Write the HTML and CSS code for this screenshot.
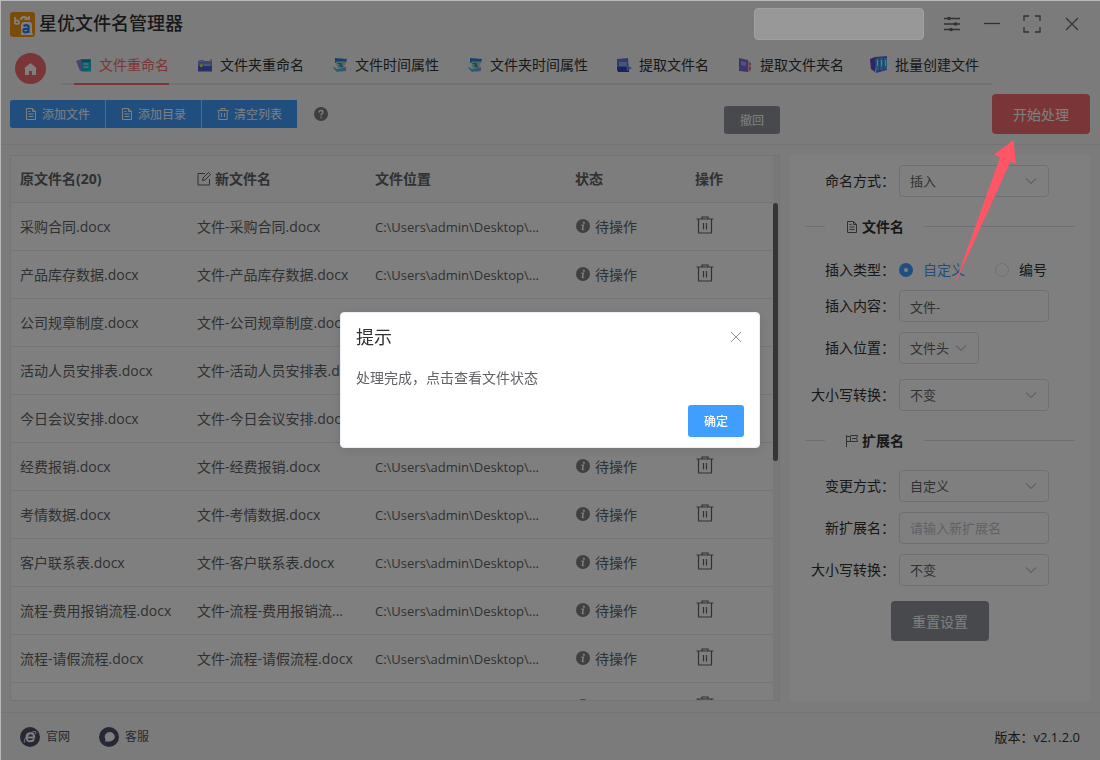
FILE: index.html
```html
<!DOCTYPE html>
<html lang="zh-CN">
<head>
  <meta charset="UTF-8">
  <meta name="viewport" content="width=device-width, initial-scale=1.0">
  <title>星优文件名管理器</title>
  <link rel="stylesheet" href="styles.css">
</head>
<body>
  <!-- Shared icons -->
  <svg class="icon-defs" aria-hidden="true">
    <symbol id="i-doc" viewBox="0 0 12 12"><path d="M1.5.5h6l3 3v8h-9zM7.5.5v3h3M3.5 6h5M3.5 8.5h5M3.5 3.5h2" fill="none" stroke="currentColor"/></symbol>
    <symbol id="i-bin" viewBox="0 0 12 12"><path d="M.5 2.5h11M4 2.5v-2h4v2M1.8 2.5v9h8.4v-9M4.5 5v4M7.5 5v4" fill="none" stroke="currentColor"/></symbol>
    <symbol id="i-trash" viewBox="0 0 18 18"><path d="M.5 3h17M6 2.5V1h6v1.5M2.500 3v14h13V3M7.500 7v6.500M10.500 7v6.500" fill="none" stroke="currentColor" stroke-width="1.200"/></symbol>
    <symbol id="i-info" viewBox="0 0 14 14"><circle cx="7" cy="7" r="7" fill="currentColor"/><circle cx="7.900" cy="3.700" r="1.100" fill="#fff"/><path d="M5.400 6.200H7.400L6.400 10.200Q6.400 10.900 8 10.200" fill="none" stroke="#fff" stroke-width="1.400"/></symbol>
    <symbol id="i-down" viewBox="0 0 12 12"><path d="M1 3.500l5 5 5-5" fill="none" stroke="currentColor" stroke-width="1.100"/></symbol>
    <symbol id="i-calendar" viewBox="0 0 16 16"><path d="M3 1l12 1-1 4H3z" fill="#2787d8"/><path d="M4 4.500h10L12 11H5z" fill="#a9d6c8"/><path d="M5.500 6.500h3l-1 3M10 6.500l-1 3h2" fill="none" stroke="#2f8fc0" stroke-width="1.200"/><path d="M11.500 7l1.500-.5-1 3z" fill="#e8d75a"/><path d="M1 9.500l4 2.500 9-2v3.500L5 15 2 12z" fill="#3ecbd2"/><path d="M9 12l5-1.500V14l-5 .5z" fill="#8d9be8"/></symbol>
  </svg>

  <!-- Title Bar -->
  <header class="titlebar">
    <svg class="logo" viewBox="0 0 25 25" aria-hidden="true">
      <rect width="25" height="25" rx="3" fill="#f29a12"/>
      <path d="M5 5v7M5 8.500h2.300a1.700 1.700 0 010 3.400H5" fill="none" stroke="#fff" stroke-width="1.800"/>
      <path d="M10.500 7.500Q14 2.500 17 7" fill="none" stroke="#fff" stroke-width="2.400"/>
      <path d="M13.500 8h6.500V3.500z" fill="#fff"/>
      <path d="M14 10h5.500q2.500 0 2.500 3v7l1 3H11v-9q0-4 3-4z" fill="#fff"/>
      <path d="M13.500 14q3-1.800 5 0v7M18.500 16.800h-3q-2.500.3-2 2.300.5 1.600 2.500 1.200 2.500-.5 2.500-2" fill="none" stroke="#2f80f0" stroke-width="2.200"/>
    </svg>
    <h1>星优文件名管理器</h1>
    <input class="search" type="text" aria-label="搜索">
    <div class="window-actions">
      <button type="button" aria-label="设置"><svg viewBox="0 0 18 18"><path d="M1 3.500h16M1 9h16M1 14.500h16" stroke="currentColor" stroke-width="1.300"/><circle cx="6" cy="3.500" r="1.800"/><circle cx="12.500" cy="9" r="1.800"/><circle cx="8" cy="14.500" r="1.800"/></svg></button>
      <button type="button" aria-label="最小化"><svg viewBox="0 0 18 18"><path d="M1 8.500h16" stroke="currentColor" stroke-width="1.300"/></svg></button>
      <button type="button" aria-label="最大化"><svg viewBox="0 0 18 18"><path d="M1 6V1h5M12 1h5v5M17 12v5h-5M6 17H1v-5" fill="none" stroke="currentColor" stroke-width="1.300"/></svg></button>
      <button type="button" aria-label="关闭"><svg viewBox="0 0 18 18"><path d="M3 3l12 12M15 3L3 15" stroke="currentColor" stroke-width="1.200"/></svg></button>
    </div>
  </header>

  <!-- Navigation -->
  <nav class="navbar">
    <a href="#" class="home" aria-label="首页"><svg viewBox="0 0 13 12"><path d="M6.500 0L0 5.500h1V12h4V8h3v4h4V5.500h1z" fill="currentColor"/></svg></a>
    <div class="tabs">
      <a href="#" class="tab active"><svg viewBox="0 0 16 16"><path d="M0 4l6-2 2 11-4 1z" fill="#8f8bdc"/><path d="M5 2h10v12.500H5.500z" fill="#18bcd0"/><path d="M6 3h8v2H6z" fill="#128fbd"/><path d="M7.500 7h5M7.500 10h5" stroke="#9deef2" stroke-width="1.400"/></svg>文件重命名</a>
      <a href="#" class="tab"><svg viewBox="0 0 16 16"><path d="M1 4h14v10H1z" fill="#7d8fe8"/><path d="M2 3h5v2H2z" fill="#8fa0ee"/><path d="M1 9h14v5.500H1z" fill="#4a60d0"/><path d="M3 7.500l2.500-1V10H3z" fill="#dfe05c"/><path d="M7 8h6" stroke="#a9d9e8"/><circle cx="14" cy="3" r="1" fill="#eb8c8c"/></svg>文件夹重命名</a>
      <a href="#" class="tab"><svg><use href="#i-calendar"/></svg>文件时间属性</a>
      <a href="#" class="tab"><svg><use href="#i-calendar"/></svg>文件夹时间属性</a>
      <a href="#" class="tab"><svg viewBox="0 0 16 16"><path d="M1 2l11-1 1 13H1z" fill="#5f78e4"/><path d="M3 5h8v4H3z" fill="#93a9f0"/><path d="M1 10h12v5H2z" fill="#2f46bc"/><path d="M10 8l6 3-5 3z" fill="#6c8de6"/></svg>提取文件名</a>
      <a href="#" class="tab"><svg viewBox="0 0 16 16"><path d="M2 1l9 2v12l-9-1z" fill="#7a6ddc"/><path d="M4 4l5 1v4l-5-1z" fill="#aba4f0"/><path d="M11 4l3 1v9l-3 1z" fill="#e6b2c3"/><path d="M13 6v2M13 10v3" stroke="#d85c77" stroke-width="1.500"/></svg>提取文件夹名</a>
      <a href="#" class="tab"><svg class="wide" viewBox="0 0 18 17"><path d="M0 3l5-2v15l-4-3z" fill="#5a4acb"/><path d="M4 1l13-1v14L6 17z" fill="#7564dc"/><path d="M6 3l3-1v12l-3 1zM10 2h3v12h-3zM14 2h3v11h-3z" fill="#46afe6"/><path d="M7.500 4v6M11.500 4v6M15.500 4v6" stroke="#cef2f3"/></svg>批量创建文件</a>
    </div>
  </nav>

  <!-- Toolbar -->
  <section class="toolbar">
    <div class="btn-group">
      <button type="button"><svg><use href="#i-doc"/></svg>添加文件</button>
      <button type="button"><svg><use href="#i-doc"/></svg>添加目录</button>
      <button type="button"><svg><use href="#i-bin"/></svg>清空列表</button>
    </div>
    <svg class="help" viewBox="0 0 14 14" role="img" aria-label="帮助"><circle cx="7" cy="7" r="7" fill="#7c7c7c"/><path d="M5 5.500Q5 3.500 7 3.500t2 1.800q0 1-1.200 1.600Q7 7.400 7 8.500M7 9.800v1.400" fill="none" stroke="#fff" stroke-width="1.300"/></svg>
    <button type="button" class="btn btn-info undo">撤回</button>
    <div class="start">
      <button type="button" class="btn btn-danger btn-large">开始处理</button>
      <svg class="pointer" viewBox="0 0 62 146" aria-hidden="true"><path d="M59.500 0L40 14.500l6 3L0 146 56.500 21.500l5.500 2z" fill="#ff5565"/></svg>
    </div>
  </section>

  <!-- File list and settings -->
  <main class="main">
    <div class="list">
      <table class="files">
        <colgroup><col class="col-old"><col class="col-new"><col class="col-path"><col class="col-state"><col></colgroup>
        <thead>
          <tr>
            <th>原文件名(20)</th>
            <th><svg class="edit" viewBox="0 0 14 14"><path d="M8 1.500H1v11.500h11.500V7M5.500 8.500L6 6l5.500-5.500 2 2L8 8z" fill="none" stroke="currentColor"/></svg>新文件名</th>
            <th>文件位置</th>
            <th>状态</th>
            <th>操作</th>
          </tr>
        </thead>
        <tbody>
          <tr><td>采购合同.docx</td><td>文件-采购合同.docx</td><td class="path">C:\Users\admin\Desktop\...</td><td><svg class="info"><use href="#i-info"/></svg>待操作</td><td><button type="button" aria-label="删除"><svg><use href="#i-trash"/></svg></button></td></tr>
          <tr><td>产品库存数据.docx</td><td>文件-产品库存数据.docx</td><td class="path">C:\Users\admin\Desktop\...</td><td><svg class="info"><use href="#i-info"/></svg>待操作</td><td><button type="button" aria-label="删除"><svg><use href="#i-trash"/></svg></button></td></tr>
          <tr><td>公司规章制度.docx</td><td>文件-公司规章制度.docx</td><td class="path">C:\Users\admin\Desktop\...</td><td><svg class="info"><use href="#i-info"/></svg>待操作</td><td><button type="button" aria-label="删除"><svg><use href="#i-trash"/></svg></button></td></tr>
          <tr><td>活动人员安排表.docx</td><td>文件-活动人员安排表.docx</td><td class="path">C:\Users\admin\Desktop\...</td><td><svg class="info"><use href="#i-info"/></svg>待操作</td><td><button type="button" aria-label="删除"><svg><use href="#i-trash"/></svg></button></td></tr>
          <tr><td>今日会议安排.docx</td><td>文件-今日会议安排.docx</td><td class="path">C:\Users\admin\Desktop\...</td><td><svg class="info"><use href="#i-info"/></svg>待操作</td><td><button type="button" aria-label="删除"><svg><use href="#i-trash"/></svg></button></td></tr>
          <tr><td>经费报销.docx</td><td>文件-经费报销.docx</td><td class="path">C:\Users\admin\Desktop\...</td><td><svg class="info"><use href="#i-info"/></svg>待操作</td><td><button type="button" aria-label="删除"><svg><use href="#i-trash"/></svg></button></td></tr>
          <tr><td>考情数据.docx</td><td>文件-考情数据.docx</td><td class="path">C:\Users\admin\Desktop\...</td><td><svg class="info"><use href="#i-info"/></svg>待操作</td><td><button type="button" aria-label="删除"><svg><use href="#i-trash"/></svg></button></td></tr>
          <tr><td>客户联系表.docx</td><td>文件-客户联系表.docx</td><td class="path">C:\Users\admin\Desktop\...</td><td><svg class="info"><use href="#i-info"/></svg>待操作</td><td><button type="button" aria-label="删除"><svg><use href="#i-trash"/></svg></button></td></tr>
          <tr><td>流程-费用报销流程.docx</td><td>文件-流程-费用报销流...</td><td class="path">C:\Users\admin\Desktop\...</td><td><svg class="info"><use href="#i-info"/></svg>待操作</td><td><button type="button" aria-label="删除"><svg><use href="#i-trash"/></svg></button></td></tr>
          <tr><td>流程-请假流程.docx</td><td>文件-流程-请假流程.docx</td><td class="path">C:\Users\admin\Desktop\...</td><td><svg class="info"><use href="#i-info"/></svg>待操作</td><td><button type="button" aria-label="删除"><svg><use href="#i-trash"/></svg></button></td></tr>
          <tr><td></td><td></td><td></td><td><svg class="info"><use href="#i-info"/></svg></td><td><button type="button" aria-label="删除"><svg><use href="#i-trash"/></svg></button></td></tr>
        </tbody>
      </table>
      <div class="scrollbar"><div class="thumb"></div></div>
    </div>

    <form class="settings">
      <div class="row">
        <label for="mode">命名方式：</label>
        <div class="select"><select id="mode"><option>插入</option></select><svg><use href="#i-down"/></svg></div>
      </div>
      <h2 class="divider"><svg><use href="#i-doc"/></svg>文件名</h2>
      <div class="row row-radio">
        <span class="label">插入类型：</span>
        <label class="radio"><input type="radio" name="type" checked><span>自定义</span></label>
        <label class="radio"><input type="radio" name="type"><span>编号</span></label>
      </div>
      <div class="row">
        <label for="content">插入内容：</label>
        <input class="text" id="content" type="text" value="文件-">
      </div>
      <div class="row row-last">
        <label for="position">插入位置：</label>
        <div class="select small"><select id="position"><option>文件头</option></select><svg><use href="#i-down"/></svg></div>
      </div>
      <div class="row">
        <label for="name-case">大小写转换：</label>
        <div class="select"><select id="name-case"><option>不变</option></select><svg><use href="#i-down"/></svg></div>
      </div>
      <h2 class="divider"><svg viewBox="0 0 12 12"><path d="M.5 0v12M.5 1.500h4v5h-4M4.500.5h7l-1 3 1 3h-7M6 3.500h4" fill="none" stroke="currentColor"/></svg>扩展名</h2>
      <div class="row">
        <label for="change">变更方式：</label>
        <div class="select"><select id="change"><option>自定义</option></select><svg><use href="#i-down"/></svg></div>
      </div>
      <div class="row">
        <label for="ext">新扩展名：</label>
        <input class="text" id="ext" type="text" placeholder="请输入新扩展名">
      </div>
      <div class="row row-last">
        <label for="ext-case">大小写转换：</label>
        <div class="select"><select id="ext-case"><option>不变</option></select><svg><use href="#i-down"/></svg></div>
      </div>
      <button type="button" class="btn btn-info btn-large reset">重置设置</button>
    </form>
  </main>

  <!-- Footer -->
  <footer class="footer">
    <a href="#"><svg viewBox="0 0 20 20"><circle cx="10" cy="10" r="10" fill="#4d5369"/><path d="M6.800 10.500h7.400q0-4.300-3.800-4.300T6.500 10.300t4 4q2.500 0 3.500-2" fill="none" stroke="#fff" stroke-width="2"/><path d="M4.500 15.500Q3 13 8 8.500T15.500 4.500q1 .5 0 2.500" fill="none" stroke="#fff"/></svg>官网</a>
    <a href="#"><svg viewBox="0 0 20 20"><circle cx="10" cy="10" r="10" fill="#4d5369"/><path d="M10.500 5a5 4.500 0 110 9.500H6l.5-2A4.800 4.800 0 0110.500 5z" fill="#fff"/></svg>客服</a>
    <span class="version">版本：v2.1.2.0</span>
  </footer>

  <!-- Message Box -->
  <div class="mask">
    <div class="dialog" role="dialog" aria-labelledby="dialog-title">
      <div class="dialog-header">
        <h2 id="dialog-title">提示</h2>
        <button type="button" aria-label="关闭"><svg viewBox="0 0 12 12"><path d="M1 1l10 10M11 1L1 11" stroke="currentColor"/></svg></button>
      </div>
      <p>处理完成，点击查看文件状态</p>
      <div class="dialog-footer">
        <button type="button" class="btn btn-primary">确定</button>
      </div>
    </div>
  </div>
</body>
</html>
```
FILE: styles.css
```css
/* Global Styles */
:root {
  --primary: #409eff;
  --danger: #f56c6c;
  --info: #909399;
  --text: #606266;
  --text-dark: #303133;
  --border: #dcdfe6;
  --line: #e6e8eb;
  --page: #f7f7f7;
}

* {
  margin: 0;
  padding: 0;
  box-sizing: border-box;
}

body {
  display: flex;
  flex-direction: column;
  height: 100vh;
  overflow: hidden;
  font-family: "Open Sans", "Noto Sans CJK SC", sans-serif;
  font-size: 14px;
  line-height: 20px;
  color: var(--text-dark);
  background-color: var(--page);
}

button,
input,
select {
  font-family: inherit;
  border: none;
  background: none;
  color: inherit;
}

a {
  color: inherit;
  text-decoration: none;
}

svg {
  flex: none;
}

.icon-defs {
  display: none;
}

/* Title Bar */
.titlebar {
  display: flex;
  align-items: center;
  height: 48px;
  padding: 0 8px 0 10px;
}

.logo {
  width: 25px;
  height: 25px;
  margin-right: 4px;
}

.titlebar h1 {
  padding-bottom: 2px;
  font-size: 18px;
  font-weight: 500;
}

.search {
  position: relative;
  z-index: 20;
  width: 170px;
  height: 32px;
  margin-left: auto;
  margin-right: 8px;
  border: 1px solid #a0a0a0;
  border-radius: 4px;
  background-color: #989898;
}

.window-actions {
  display: flex;
  color: var(--text);
  fill: currentColor;
}

.window-actions button {
  display: flex;
  align-items: center;
  justify-content: center;
  width: 40px;
  height: 32px;
}

.window-actions svg {
  width: 18px;
  height: 18px;
}

/* Navigation */
.navbar {
  display: flex;
  align-items: flex-start;
  padding: 0 15px;
}

.home {
  display: flex;
  align-items: center;
  justify-content: center;
  width: 31px;
  height: 31px;
  margin-top: 5px;
  margin-right: 15px;
  border-radius: 50%;
  background-color: var(--danger);
  color: #fff;
}

.home svg {
  width: 13px;
  height: 12px;
}

.tabs {
  display: flex;
  gap: 26px;
  height: 37px;
  padding: 0 13px;
  border-bottom: 2px solid #e4e7ed;
}

.tab {
  display: flex;
  align-items: center;
  height: 37px;
  padding-left: 2px;
  padding-bottom: 2px;
  white-space: nowrap;
  border-bottom: 2px solid transparent;
}

.tab svg {
  width: 16px;
  height: 16px;
  margin-right: 7px;
}

.tab .wide {
  width: 18px;
  height: 17px;
  margin-left: -2px;
}

.tab.active {
  color: var(--danger);
  border-bottom-color: var(--danger);
}

/* Toolbar */
.toolbar {
  display: flex;
  align-items: center;
  padding: 9px 10px 10px;
  border-bottom: 1px solid var(--line);
}

.btn-group {
  display: flex;
  gap: 1px;
  border-radius: 3px 0 0 3px;
  overflow: hidden;
  background-color: #b3d8ff;
}

.btn-group button {
  display: flex;
  align-items: center;
  justify-content: center;
  gap: 5px;
  width: 95px;
  height: 28px;
  font-size: 12px;
  color: #fff;
  background-color: var(--primary);
}

.btn-group svg {
  width: 12px;
  height: 12px;
}

.help {
  width: 14px;
  height: 14px;
  margin-left: 17px;
}

.btn {
  height: 28px;
  padding: 0 16px;
  border-radius: 3px;
  font-size: 12px;
  color: #fff;
}

.btn-large {
  display: block;
  height: 40px;
  padding: 0 21px;
  border-radius: 4px;
  font-size: 14px;
}

.btn-primary {
  height: 32px;
  font-weight: 500;
  background-color: var(--primary);
}

.btn-info {
  background-color: var(--info);
}

.btn-danger {
  background-color: var(--danger);
}

.undo {
  margin-top: 12px;
  margin-left: auto;
}

.start {
  position: relative;
  margin-left: 212px;
}

.pointer {
  position: absolute;
  z-index: 20;
  top: 46px;
  left: -38px;
  width: 62px;
  height: 146px;
}

/* File list */
.main {
  display: flex;
  flex: 1;
  gap: 10px;
  min-height: 0;
  padding: 10px 10px 11px;
}

.list {
  display: flex;
  flex: 1;
  overflow: hidden;
  border: 1px solid var(--line);
  background-color: #fff;
}

.files {
  flex: 1;
  align-self: flex-start;
  table-layout: fixed;
  border-collapse: separate;
  border-spacing: 0;
}

.col-old {
  width: 177px;
}

.col-new {
  width: 178px;
}

.col-path {
  width: 200px;
}

.col-state {
  width: 120px;
}

.files th,
.files td {
  height: 48px;
  padding-left: 9px;
  text-align: left;
  white-space: nowrap;
  overflow: hidden;
  border-bottom: 1px solid var(--line);
  color: var(--text);
}

.files th {
  height: 47px;
  font-weight: 700;
  background-color: #fafafa;
}

.files .path {
  font-size: 13px;
}

.edit {
  width: 14px;
  height: 14px;
  margin-right: 4px;
  vertical-align: -2px;
}

.info {
  width: 14px;
  height: 14px;
  margin-left: 1px;
  margin-right: 5px;
  vertical-align: -1px;
  color: #7f8184;
}

.files td button {
  display: block;
  height: 22px;
  padding-bottom: 4px;
}

.files td button svg {
  display: block;
  width: 20px;
  height: 18px;
}

.scrollbar {
  width: 6px;
  padding-top: 47px;
  background-color: #eff1f1;
}

.thumb {
  width: 5px;
  height: 52%;
  border-radius: 3px;
  background-color: #686c6c;
}

/* Settings */
.settings {
  width: 300px;
  padding: 10px 15px;
  background-color: #fff;
}

.row {
  display: flex;
  align-items: center;
  margin-bottom: 10px;
  white-space: nowrap;
}

.row > label:first-child,
.row .label {
  width: 90px;
  margin-right: 4px;
  text-align: right;
}

.row-last {
  margin-bottom: 15px;
}

.row-radio {
  padding-top: 4px;
}

.select {
  position: relative;
  width: 150px;
}

.select.small {
  width: 80px;
}

.select select,
.text {
  width: 100%;
  height: 32px;
  padding: 0 10px;
  border: 1px solid var(--border);
  border-radius: 4px;
  font-size: 13px;
  color: var(--text);
  appearance: none;
}

.text {
  width: 150px;
}

.text::placeholder {
  color: #c0c4cc;
}

.select svg {
  position: absolute;
  top: 10px;
  right: 12px;
  width: 12px;
  height: 12px;
  color: #c0c4cc;
  pointer-events: none;
}

.divider {
  display: flex;
  align-items: center;
  margin: 20px 0;
  font-size: 14px;
  font-weight: 700;
  line-height: 19px;
}

.divider::before,
.divider::after {
  content: '';
  width: 20px;
  height: 1px;
  margin-right: 21px;
  background-color: var(--border);
}

.divider::after {
  flex: 1;
  margin-right: 0;
  margin-left: 20px;
}

.divider svg {
  width: 12px;
  height: 12px;
  margin-right: 4px;
  color: var(--text);
}

.radio {
  display: flex;
  align-items: center;
  gap: 10px;
}

.radio + .radio {
  margin-left: 30px;
}

.radio input {
  width: 14px;
  height: 14px;
  border: 1px solid var(--border);
  border-radius: 50%;
  appearance: none;
}

.radio input:checked {
  border: 5px solid var(--primary);
}

.radio input:checked + span {
  color: var(--primary);
}

.reset {
  margin: 0 auto;
}

/* Footer */
.footer {
  display: flex;
  align-items: center;
  gap: 29px;
  height: 48px;
  padding: 0 20px;
  border-top: 1px solid var(--line);
}

.footer a {
  display: flex;
  align-items: center;
  gap: 6px;
  font-size: 12px;
  color: #4d5369;
}

.footer svg {
  width: 20px;
  height: 20px;
}

.version {
  margin-left: auto;
  font-size: 13px;
}

/* Message Box */
.mask {
  position: fixed;
  inset: 0;
  z-index: 10;
  display: flex;
  align-items: center;
  justify-content: center;
  background-color: rgba(0, 0, 0, 0.5);
  box-shadow: inset 1px 1px 0 #b8bab9;
}

.dialog {
  width: 420px;
  padding-bottom: 10px;
  border: 1px solid #ebeef5;
  border-radius: 4px;
  background-color: #fff;
  box-shadow: 0 2px 12px rgba(0, 0, 0, 0.1);
}

.dialog-header {
  display: flex;
  align-items: center;
  justify-content: space-between;
  padding: 15px 15px 10px;
}

.dialog-header h2 {
  font-size: 18px;
  font-weight: 400;
  line-height: 18px;
}

.dialog-header button {
  width: 16px;
  height: 16px;
  color: var(--info);
}

.dialog-header svg {
  display: block;
  width: 12px;
  height: 12px;
  margin: 0 auto;
}

.dialog p {
  padding: 10px 15px;
  line-height: 24px;
  color: var(--text);
}

.dialog-footer {
  display: flex;
  justify-content: flex-end;
  padding: 5px 15px 0;
}
```
